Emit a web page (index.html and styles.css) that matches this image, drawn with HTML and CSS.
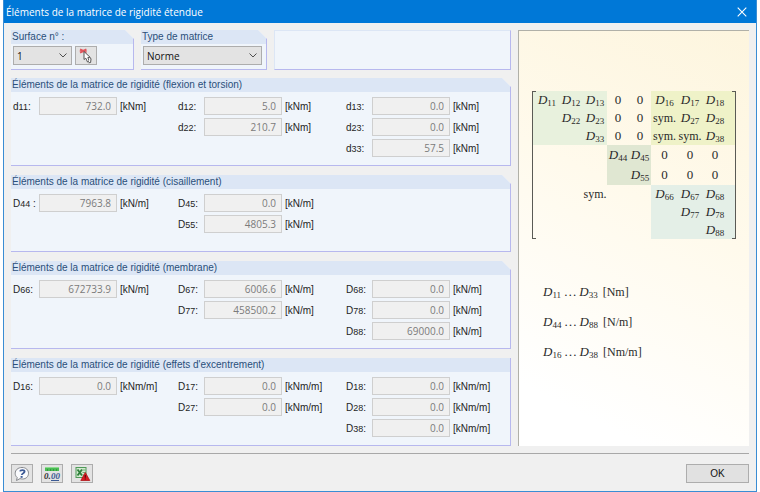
FILE: index.html
```html
<!DOCTYPE html>
<html lang="fr">
<head>
  <meta charset="UTF-8">
  <meta name="viewport" content="width=device-width, initial-scale=1.0">
  <title>Éléments de la matrice de rigidité étendue</title>
  <link rel="stylesheet" href="styles.css">
</head>
<body>
  <div class="window">
    <header class="title-bar">
      <h1>Éléments de la matrice de rigidité étendue</h1>
      <button type="button" class="close-button" aria-label="Fermer">
        <svg width="10" height="10" viewBox="0 0 10 10"><path d="M0.7 0.7 L9.3 9.3 M9.3 0.7 L0.7 9.3" stroke="#fff" stroke-width="1.1" fill="none"/></svg>
      </button>
    </header>

    <main class="content">
      <form class="settings">
        <div class="top-row">
          <section class="group group-surface">
            <h2><label for="surface">Surface n° :</label></h2>
            <div class="controls">
              <select id="surface"><option>1</option></select>
              <button type="button" class="icon-button" aria-label="Sélectionner">
                <svg width="16" height="16" viewBox="0 0 16 16">
                  <path d="M2 1.5 L8.5 4.5 M2 4.5 L8.5 1.5" stroke="#e0565c" stroke-width="2" fill="none"/>
                  <path d="M6 3.5 V11.5 L7.8 10.2 L9.5 14 L11.3 13.2 L9.8 9.6 L12 9.2 Z" fill="#fff" stroke="#555" stroke-width="1"/>
                  <path d="M12 9.2 L13 11 L12.6 14.5 L10.5 14.8" fill="#fff" stroke="#555" stroke-width="1"/>
                </svg>
              </button>
            </div>
          </section>
          <section class="group group-type">
            <h2><label for="matrix-type">Type de matrice</label></h2>
            <div class="controls">
              <select id="matrix-type"><option>Norme</option></select>
            </div>
          </section>
          <section class="group square group-empty"></section>
        </div>

        <section class="group">
          <h2>Éléments de la matrice de rigidité (flexion et torsion)</h2>
          <div class="fields">
            <div class="column">
              <div class="field"><label for="d11">d<small>11</small>:</label><input id="d11" value="732.0" disabled><span>[kNm]</span></div>
            </div>
            <div class="column">
              <div class="field"><label for="d12">d<small>12</small>:</label><input id="d12" value="5.0" disabled><span>[kNm]</span></div>
              <div class="field"><label for="d22">d<small>22</small>:</label><input id="d22" value="210.7" disabled><span>[kNm]</span></div>
            </div>
            <div class="column">
              <div class="field"><label for="d13">d<small>13</small>:</label><input id="d13" value="0.0" disabled><span>[kNm]</span></div>
              <div class="field"><label for="d23">d<small>23</small>:</label><input id="d23" value="0.0" disabled><span>[kNm]</span></div>
              <div class="field"><label for="d33">d<small>33</small>:</label><input id="d33" value="57.5" disabled><span>[kNm]</span></div>
            </div>
          </div>
        </section>

        <section class="group">
          <h2>Éléments de la matrice de rigidité (cisaillement)</h2>
          <div class="fields fields-short">
            <div class="column">
              <div class="field"><label for="d44">D<small>44</small> :</label><input id="d44" value="7963.8" disabled><span>[kN/m]</span></div>
            </div>
            <div class="column">
              <div class="field"><label for="d45">D<small>45</small>:</label><input id="d45" value="0.0" disabled><span>[kN/m]</span></div>
              <div class="field"><label for="d55">D<small>55</small>:</label><input id="d55" value="4805.3" disabled><span>[kN/m]</span></div>
            </div>
          </div>
        </section>

        <section class="group">
          <h2>Éléments de la matrice de rigidité (membrane)</h2>
          <div class="fields">
            <div class="column">
              <div class="field"><label for="d66">D<small>66</small>:</label><input id="d66" value="672733.9" disabled><span>[kN/m]</span></div>
            </div>
            <div class="column">
              <div class="field"><label for="d67">D<small>67</small>:</label><input id="d67" value="6006.6" disabled><span>[kN/m]</span></div>
              <div class="field"><label for="d77">D<small>77</small>:</label><input id="d77" value="458500.2" disabled><span>[kN/m]</span></div>
            </div>
            <div class="column">
              <div class="field"><label for="d68">D<small>68</small>:</label><input id="d68" value="0.0" disabled><span>[kN/m]</span></div>
              <div class="field"><label for="d78">D<small>78</small>:</label><input id="d78" value="0.0" disabled><span>[kN/m]</span></div>
              <div class="field"><label for="d88">D<small>88</small>:</label><input id="d88" value="69000.0" disabled><span>[kN/m]</span></div>
            </div>
          </div>
        </section>

        <section class="group square">
          <h2>Éléments de la matrice de rigidité (effets d'excentrement)</h2>
          <div class="fields">
            <div class="column">
              <div class="field"><label for="d16">D<small>16</small>:</label><input id="d16" value="0.0" disabled><span>[kNm/m]</span></div>
            </div>
            <div class="column">
              <div class="field"><label for="d17">D<small>17</small>:</label><input id="d17" value="0.0" disabled><span>[kNm/m]</span></div>
              <div class="field"><label for="d27">D<small>27</small>:</label><input id="d27" value="0.0" disabled><span>[kNm/m]</span></div>
            </div>
            <div class="column">
              <div class="field"><label for="d18">D<small>18</small>:</label><input id="d18" value="0.0" disabled><span>[kNm/m]</span></div>
              <div class="field"><label for="d28">D<small>28</small>:</label><input id="d28" value="0.0" disabled><span>[kNm/m]</span></div>
              <div class="field"><label for="d38">D<small>38</small>:</label><input id="d38" value="0.0" disabled><span>[kNm/m]</span></div>
            </div>
          </div>
        </section>
      </form>

      <aside class="preview">
        <div class="matrix-frame">
          <table class="matrix">
            <colgroup>
              <col class="w-l"><col class="w-m"><col class="w-m"><col class="w-s"><col class="w-s"><col class="w-l"><col class="w-m"><col>
            </colgroup>
            <tr>
              <td class="bend"><i>D</i><small>11</small></td><td class="bend"><i>D</i><small>12</small></td><td class="bend"><i>D</i><small>13</small></td>
              <td>0</td><td>0</td>
              <td class="ecc"><i>D</i><small>16</small></td><td class="ecc"><i>D</i><small>17</small></td><td class="ecc"><i>D</i><small>18</small></td>
            </tr>
            <tr>
              <td class="bend"></td><td class="bend"><i>D</i><small>22</small></td><td class="bend"><i>D</i><small>23</small></td>
              <td>0</td><td>0</td>
              <td class="ecc sym">sym.</td><td class="ecc"><i>D</i><small>27</small></td><td class="ecc"><i>D</i><small>28</small></td>
            </tr>
            <tr>
              <td class="bend"></td><td class="bend"></td><td class="bend"><i>D</i><small>33</small></td>
              <td>0</td><td>0</td>
              <td class="ecc sym">sym.</td><td class="ecc sym">sym.</td><td class="ecc"><i>D</i><small>38</small></td>
            </tr>
            <tr class="tall">
              <td></td><td></td><td></td>
              <td class="shear"><i>D</i><small>44</small></td><td class="shear"><i>D</i><small>45</small></td>
              <td>0</td><td>0</td><td>0</td>
            </tr>
            <tr class="tall">
              <td></td><td></td><td></td>
              <td class="shear"></td><td class="shear"><i>D</i><small>55</small></td>
              <td>0</td><td>0</td><td>0</td>
            </tr>
            <tr>
              <td></td><td></td><td class="sym">sym.</td><td></td><td></td>
              <td class="memb"><i>D</i><small>66</small></td><td class="memb"><i>D</i><small>67</small></td><td class="memb"><i>D</i><small>68</small></td>
            </tr>
            <tr>
              <td></td><td></td><td></td><td></td><td></td>
              <td class="memb"></td><td class="memb"><i>D</i><small>77</small></td><td class="memb"><i>D</i><small>78</small></td>
            </tr>
            <tr>
              <td></td><td></td><td></td><td></td><td></td>
              <td class="memb"></td><td class="memb"></td><td class="memb"><i>D</i><small>88</small></td>
            </tr>
          </table>
        </div>
        <div class="legend">
          <p><i>D</i><small>11</small>&thinsp;…&thinsp;<i>D</i><small>33</small><span>[Nm]</span></p>
          <p><i>D</i><small>44</small>&thinsp;…&thinsp;<i>D</i><small>88</small><span>[N/m]</span></p>
          <p><i>D</i><small>16</small>&thinsp;…&thinsp;<i>D</i><small>38</small><span>[Nm/m]</span></p>
        </div>
      </aside>
    </main>

    <footer class="button-bar">
      <button type="button" class="icon-button" aria-label="Aide">
        <svg width="18" height="16" viewBox="0 0 18 16">
          <path d="M9 1.5 C13 1.5 15.5 4 15.5 7.3 C15.5 10.6 13 13 9.5 13 C8.6 13 7.8 12.9 7 12.6 L3.5 14.5 L4.2 11.5 C2.8 10.4 2.2 9 2.2 7.3 C2.2 4 5 1.5 9 1.5 Z" fill="#fafbfd" stroke="#85878c"/>
          <path d="M7 5.4 C7.4 3.7 11.5 3.5 11.6 5.6 C11.6 7.2 9 7.2 8.8 9" fill="none" stroke="#3d5a96" stroke-width="1.8"/>
          <rect x="7.6" y="10" width="2" height="1.8" fill="#3d5a96"/>
        </svg>
      </button>
      <button type="button" class="icon-button" aria-label="Unités et décimales">
        <svg width="18" height="16" viewBox="0 0 18 16">
          <rect x="2" y="1" width="14" height="4" fill="#4bbd55"/>
          <path d="M2 1.5 H16" stroke="#8ddc8f"/>
          <path d="M4.5 3 V5 M7.5 3 V5 M10.5 3 V5 M13.5 3 V5" stroke="#2f8f3b" stroke-width="0.8"/>
          <text x="1" y="13" class="icon-text">0.</text>
          <text x="8" y="13" class="icon-text icon-text-blue">00</text>
          <path d="M8 14.5 H16" stroke="#3c5a94"/>
        </svg>
      </button>
      <button type="button" class="icon-button" aria-label="Exporter vers Excel">
        <svg width="18" height="16" viewBox="0 0 18 16">
          <rect x="3" y="1.5" width="10" height="10" fill="#d3ead0" stroke="#4f9a58"/>
          <path d="M9.5 4 H12.5 M9.5 6.5 H12.5 M9.5 9 H12.5" stroke="#6fae72"/>
          <path d="M4.5 3.5 L9 9.5 M9 3.5 L4.5 9.5" stroke="#2e7f3b" stroke-width="1.9"/>
          <path d="M12.3 6.5 L16.8 14.5 H7.8 Z" fill="#d81c23" stroke="#b3151b" stroke-width="0.8"/>
          <path d="M12.3 9 V11.8 M12.3 12.5 V13.6" stroke="#5c090d" stroke-width="1.2"/>
        </svg>
      </button>
      <button type="button" class="ok-button">OK</button>
    </footer>
  </div>
</body>
</html>
```

FILE: styles.css
```css
* {
  box-sizing: border-box;
}

body {
  margin: 0;
  background: #ffffff;
  font-family: "Liberation Sans", Arial, sans-serif;
  font-size: 10px;
  color: #1e1e1e;
}

h1,
h2,
p {
  margin: 0;
  font-weight: normal;
}

.window {
  display: flex;
  flex-direction: column;
  min-height: 100vh;
  margin: 0 3px;
  border: 1px solid #3a8dd4;
  border-top: none;
  background: #f0f0f0;
}

/* Title bar */
.title-bar {
  display: flex;
  justify-content: space-between;
  align-items: center;
  height: 23px;
  padding: 0 9px 0 2px;
  background: #0078d7;
  color: #ffffff;
}

.title-bar h1 {
  font-family: "Open Sans", "Noto Sans", sans-serif;
  font-size: 10px;
}

.close-button {
  display: flex;
  padding: 0;
  border: none;
  background: none;
}

/* Main area */
.content {
  display: grid;
  grid-template-columns: 1fr 231px;
  gap: 7px;
  padding: 7px 7px 0;
}

.settings {
  display: flex;
  flex-direction: column;
  gap: 9px;
}

.top-row {
  display: flex;
  gap: 7px;
  margin-bottom: -1px;
}

.group {
  border-right: 1px solid #b7b8ee;
  border-bottom: 1px solid #b7b8ee;
  background: #f0f5fb;
  clip-path: polygon(0 0, calc(100% - 9px) 0, 100% 9px, 100% 100%, 0 100%);
}

.group.square {
  clip-path: none;
}

.group h2 {
  height: 14px;
  padding-left: 1px;
  background: #dce6f5;
  color: #2a4f7a;
  font-size: 10px;
  line-height: 14px;
}

.group-surface {
  flex: 0 0 123px;
}

.group-type {
  flex: 0 0 126px;
}

.group-empty {
  flex: 1;
  border-top: 1px solid #dce6f5;
  border-left: 1px solid #dce6f5;
}

.controls {
  display: flex;
  gap: 3px;
  padding: 2px 4px 4px 2px;
}

.controls select {
  flex: 1;
  height: 19px;
  padding: 0 16px 0 3px;
  border: 1px solid #adadad;
  border-radius: 0;
  appearance: none;
  background: #e3e3e3 url("data:image/svg+xml,%3Csvg xmlns='http://www.w3.org/2000/svg' width='8' height='5'%3E%3Cpath d='M0.5 0.5 L4 4 L7.5 0.5' fill='none' stroke='%23505050'/%3E%3C/svg%3E") no-repeat right 4px center;
  color: #111111;
  font-family: "Open Sans", "Noto Sans", sans-serif;
  font-size: 10px;
}

.group-surface .controls {
  padding-right: 36px;
}

.icon-button {
  display: flex;
  justify-content: center;
  align-items: center;
  width: 22px;
  height: 19px;
  padding: 0;
  border: 1px solid #adadad;
  background: #e3e3e3;
}

/* Value fields */
.fields {
  display: grid;
  grid-template-columns: 165fr 168fr 164fr;
  padding: 5px 0 8px 2px;
}

.fields-short {
  padding-bottom: 18px;
}

.column {
  display: flex;
  flex-direction: column;
  gap: 3px;
}

.field {
  display: flex;
  align-items: center;
  height: 18px;
}

.field label {
  width: 26px;
  white-space: nowrap;
}

.field small {
  font-size: 9px;
}

.field input {
  width: 78px;
  height: 18px;
  padding: 0 5px;
  border: 1px solid #cfcfcf;
  background: #f0f0f0;
  color: #7b7b7b;
  font-family: "Open Sans", "Noto Sans", sans-serif;
  font-size: 10px;
  text-align: right;
}

.field span {
  margin-left: 3px;
}

/* Matrix preview */
.preview {
  padding: 60px 13px 0;
  border-top: 1px solid #b0b0a8;
  border-left: 1px solid #b0b0a8;
  background: linear-gradient(207deg, #fdf5de 0%, #fffaec 42%, #ffffff 88%);
  color: #2a2a2a;
  font-family: "Liberation Serif", "Times New Roman", serif;
  font-size: 13px;
}

.preview small {
  position: relative;
  top: 2px;
  font-size: 9px;
  line-height: 1;
}

.matrix-frame {
  position: relative;
}

.matrix-frame::before,
.matrix-frame::after {
  content: "";
  position: absolute;
  top: 0;
  bottom: 0;
  width: 3px;
  border: 1px solid #5a5a55;
}

.matrix-frame::before {
  left: 0;
  border-right: none;
}

.matrix-frame::after {
  right: 0;
  border-left: none;
}

.matrix {
  width: 100%;
  table-layout: fixed;
  border-collapse: collapse;
}

.w-s {
  width: 22px;
}

.w-m {
  width: 24px;
}

.w-l {
  width: 27px;
}

.matrix td {
  height: 18px;
  padding: 0;
  line-height: 14px;
  text-align: center;
  white-space: nowrap;
}

.matrix td:first-child {
  padding-left: 3px;
}

.matrix td:last-child {
  padding-right: 8px;
}

.matrix .tall td {
  height: 20px;
}

.matrix .sym {
  font-size: 12px;
}

.bend {
  background: #e8f1dd;
}

.ecc {
  background: #eff2c8;
}

.shear {
  background: #e0e7d2;
}

.memb {
  background: #e4efe7;
}

.legend {
  display: flex;
  flex-direction: column;
  gap: 12px;
  padding: 44px 0 0 11px;
}

.legend p {
  line-height: 18px;
}

.legend span {
  margin-left: 5px;
  font-size: 12px;
}

/* Bottom buttons */
.button-bar {
  display: flex;
  align-items: center;
  gap: 8px;
  margin: 7px 7px 0;
  padding: 10px 0 8px;
  border-top: 1px solid #a8a8a8;
}

.ok-button {
  width: 63px;
  height: 19px;
  margin-left: auto;
  padding: 0;
  border: 1px solid #adadad;
  background: #e1e1e1;
  color: #111111;
  font-family: "Liberation Sans", Arial, sans-serif;
  font-size: 10px;
}

.icon-text {
  font-family: "Liberation Serif", serif;
  font-size: 9px;
  font-style: italic;
  font-weight: bold;
  fill: #333333;
}

.icon-text-blue {
  fill: #3c5a94;
}
```
